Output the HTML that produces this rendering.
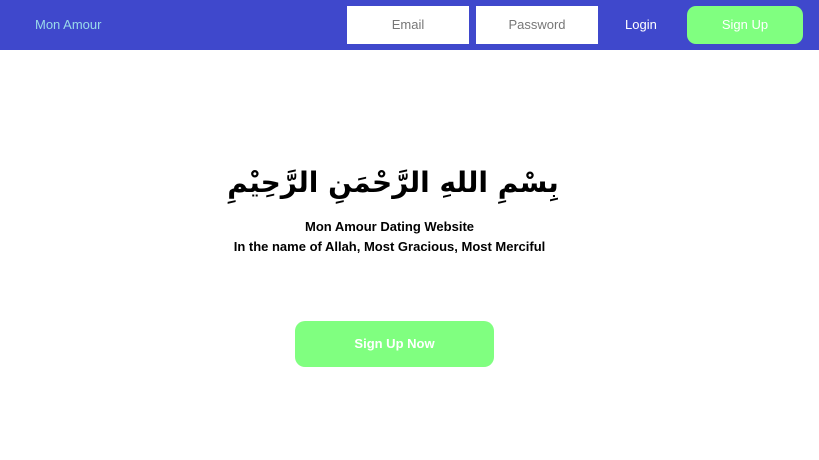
<!DOCTYPE html>
<html><head><meta charset="utf-8"><style>
body{margin:0;width:819px;height:460px;background:#fff;font-family:"Liberation Sans",sans-serif;position:relative;overflow:hidden}
.nav{position:absolute;left:0;top:0;width:819px;height:50px;background:#3f48cc}
.logo{position:absolute;left:35px;top:17px;color:#99d9ea;font-size:13px}
.inp{position:absolute;top:6px;height:38px;width:122px;background:#fff;color:#777;font-size:13px;text-align:center;line-height:38px}
.login{position:absolute;left:625px;top:17px;color:#fff;font-size:13px}
.su{position:absolute;left:687px;top:6px;width:116px;height:38px;background:#80ff80;border-radius:9px;color:#fff;font-size:13px;text-align:center;line-height:38px}
.ar{position:absolute;left:0;width:786px;top:166px;text-align:center;font-family:"DejaVu Sans",sans-serif;font-size:28px;font-weight:bold;direction:rtl;color:#000}
.t{position:absolute;left:0;width:779px;text-align:center;font-weight:bold;font-size:13px;color:#000}
.big{position:absolute;left:295px;top:321px;width:199px;height:46px;background:#80ff80;border-radius:10px;color:#fff;font-weight:bold;font-size:13px;text-align:center;line-height:46px}
</style></head><body>
<div class="nav">
<div class="logo">Mon Amour</div>
<div class="inp" style="left:347px">Email</div>
<div class="inp" style="left:476px">Password</div>
<div class="login">Login</div>
<div class="su">Sign Up</div>
</div>
<div class="ar">بِسْمِ اللهِ الرَّحْمَنِ الرَّحِيْمِ</div>
<div class="t" style="top:219px">Mon Amour Dating Website</div>
<div class="t" style="top:239px">In the name of Allah, Most Gracious, Most Merciful</div>
<div class="big">Sign Up Now</div>
</body></html>
